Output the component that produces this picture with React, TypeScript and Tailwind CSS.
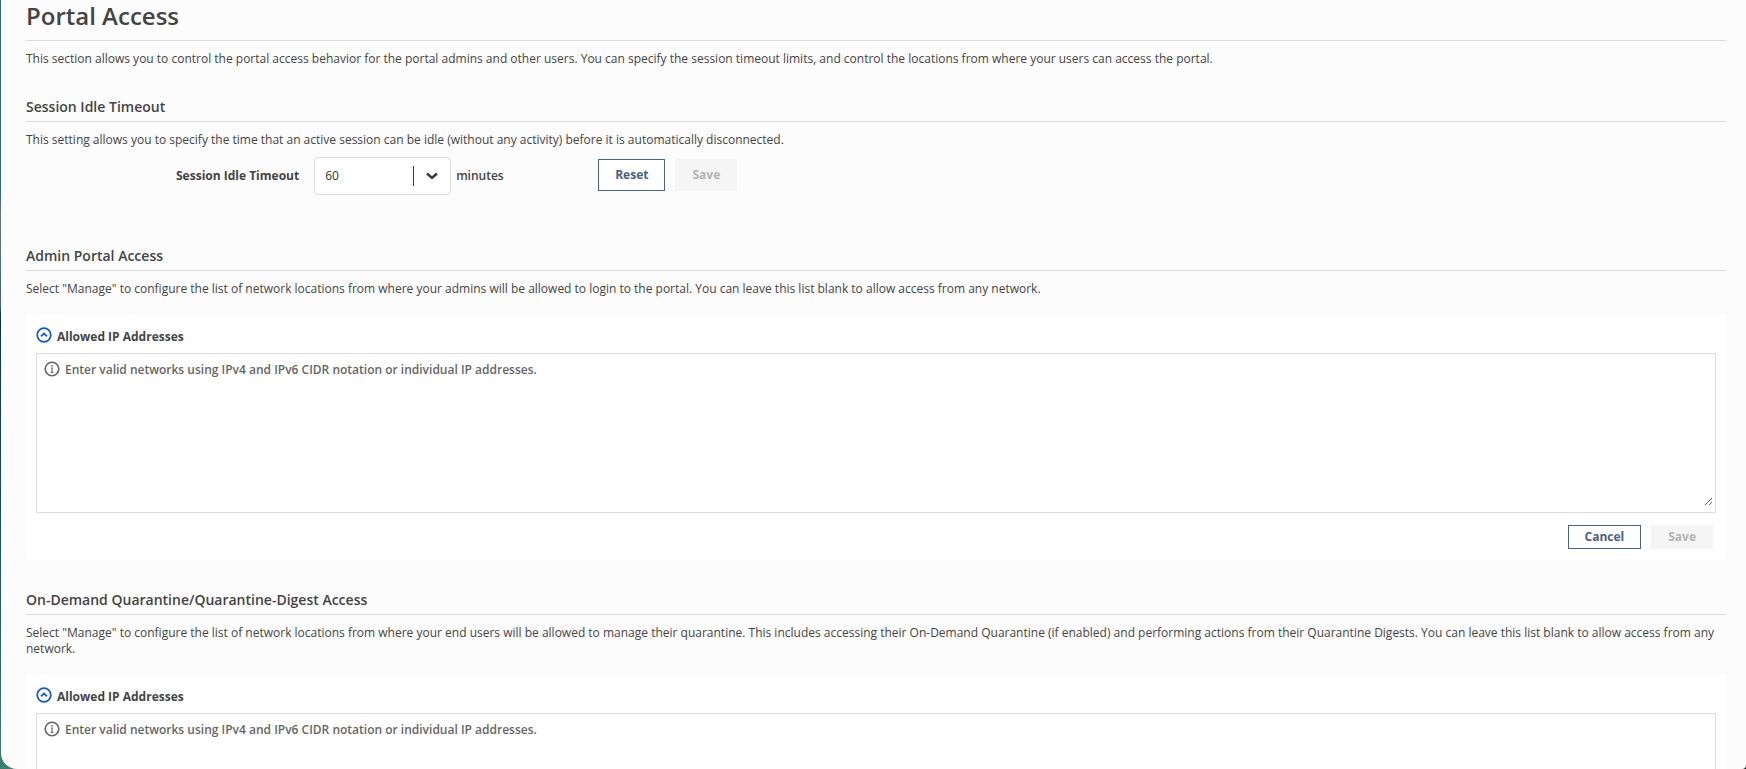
import { useId, useState } from "react";

interface AccessSectionProps {
  title: string;
  description: string;
}

const FONT = "font-['Open_Sans',sans-serif]";

// Wallpaper behind the panel, only visible at its left edge and corners.
const WALLPAPER =
  "bg-[#1c1c1c] bg-[linear-gradient(#2f6694_0%,#2f6694_25%,#5f7688_28%,#3b6283_40%,#0a3158_41%,#0f4f6a_65%,#256b70_85%,#3d8070_100%)] bg-size-[50%_100%] bg-no-repeat";

const outlineButton =
  "border border-[#48627f] bg-white px-4 text-xs font-bold text-[#48627f]";
const saveButton =
  "bg-[#f5f5f5] px-[17px] text-xs font-bold text-[#4a4a4a] disabled:text-[#b3b3b3]";

function CollapseIcon() {
  return (
    <svg aria-hidden viewBox="0 0 16 16" className="size-4" fill="none" stroke="#0f5bd7">
      <circle cx="8" cy="8" r="6.8" strokeWidth="1.7" />
      <path d="M5 9.4 8 6.6l3 2.8" strokeWidth="1.8" />
    </svg>
  );
}

function InfoIcon() {
  return (
    <svg aria-hidden viewBox="0 0 16 16" className="size-4" fill="none" stroke="#666">
      <circle cx="8" cy="8" r="6.8" strokeWidth="1.6" />
      <path d="M7 7.1h1.1v4.3M6.8 11.4h2.6" strokeWidth="1.1" />
      <circle cx="8" cy="4.9" r="0.8" fill="#666" stroke="none" />
    </svg>
  );
}

function SectionHeading({ children }: { children: string }) {
  return (
    <h2 className="border-b border-[#dcdcdc] pb-1 text-sm leading-5 font-semibold">
      {children}
    </h2>
  );
}

function SessionTimeout() {
  const id = useId();
  const [minutes, setMinutes] = useState("60");

  return (
    <section className="mt-[30px] mb-5">
      <SectionHeading>Session Idle Timeout</SectionHeading>
      <p className="mt-2.5 text-xs leading-4">
        This setting allows you to specify the time that an active session can be idle (without any
        activity) before it is automatically disconnected.
      </p>
      <div className="mt-[9px] flex items-center pl-[150px]">
        <label htmlFor={id} className="mr-[15px] text-xs font-bold">
          Session Idle Timeout
        </label>
        <div className="relative">
          <select
            id={id}
            value={minutes}
            onChange={(e) => setMinutes(e.target.value)}
            className="h-[38px] w-[137px] appearance-none rounded border border-[#dcdcdc] bg-white pl-2.5 text-xs font-medium text-[#333]"
          >
            <option>15</option>
            <option>30</option>
            <option>60</option>
          </select>
          <div className="pointer-events-none absolute inset-y-0 right-[13px] flex items-center gap-3">
            <span className="h-5 w-px bg-[#333]" />
            <svg aria-hidden viewBox="0 0 12 8" className="h-2 w-3" fill="none" stroke="#3a3a3a">
              <path d="M1 1.5 6 6l5-4.5" strokeWidth="2.4" />
            </svg>
          </div>
        </div>
        <span className="ml-[5px] w-[142px] text-xs font-semibold">minutes</span>
        <div className="flex gap-2.5 pb-0.5">
          <button
            type="button"
            className={`h-8 ${outlineButton}`}
            onClick={() => setMinutes("60")}
          >
            Reset
          </button>
          <button type="button" disabled className={`h-8 ${saveButton}`}>
            Save
          </button>
        </div>
      </div>
    </section>
  );
}

function AccessSection({ title, description }: AccessSectionProps) {
  const id = useId();
  const [open, setOpen] = useState(true);
  const [networks, setNetworks] = useState("");

  return (
    <section className="pt-[31px]">
      <SectionHeading>{title}</SectionHeading>
      <p className="mt-2.5 text-xs leading-4">{description}</p>
      <div className="mt-[18px] bg-white px-2.5 pt-3 pb-2.5">
        <div className="flex h-[26px] items-start gap-[5px]">
          <button
            type="button"
            aria-expanded={open}
            aria-label="Toggle allowed IP addresses"
            onClick={() => setOpen(!open)}
          >
            <CollapseIcon />
          </button>
          <label htmlFor={id} className="text-xs leading-5 font-bold">
            Allowed IP Addresses
          </label>
        </div>
        {open && (
          <>
            <div className="relative border border-[#dcdcdc] pt-1 pr-0.5 pb-1.5 pl-1">
              <textarea
                id={id}
                value={networks}
                onChange={(e) => setNetworks(e.target.value)}
                placeholder="Enter valid networks using IPv4 and IPv6 CIDR notation or individual IP addresses."
                className="block h-[148px] w-full pt-0.5 pl-6 text-xs leading-5 font-semibold outline-none placeholder:text-[#666]"
              />
              {networks === "" && (
                <span className="pointer-events-none absolute top-[7px] left-[7px]">
                  <InfoIcon />
                </span>
              )}
            </div>
            <div className="mt-3 flex justify-end gap-2.5 pr-[3px]">
              <button
                type="button"
                className={`h-6 ${outlineButton}`}
                onClick={() => setNetworks("")}
              >
                Cancel
              </button>
              <button type="button" disabled={networks === ""} className={`h-6 ${saveButton}`}>
                Save
              </button>
            </div>
          </>
        )}
      </div>
    </section>
  );
}

export default function App() {
  return (
    <div className={`h-screen pl-px ${WALLPAPER}`}>
      <main
        className={`h-full overflow-y-auto rounded-br-[4px] rounded-bl-[16px] bg-[#fcfcfc] pr-5 pl-[25px] text-[#444] [scrollbar-width:none] ${FONT}`}
      >
        <h1 className="border-b border-[#dcdcdc] pb-2 text-2xl leading-8 font-semibold">
          Portal Access
        </h1>
        <p className="mt-2.5 text-xs leading-4">
          This section allows you to control the portal access behavior for the portal admins and
          other users. You can specify the session timeout limits, and control the locations from
          where your users can access the portal.
        </p>
        <SessionTimeout />
        <AccessSection
          title="Admin Portal Access"
          description={
            'Select "Manage" to configure the list of network locations from where your admins will be allowed to login to the portal. You can leave this list blank to allow access from any network.'
          }
        />
        <AccessSection
          title="On-Demand Quarantine/Quarantine-Digest Access"
          description={
            'Select "Manage" to configure the list of network locations from where your end users will be allowed to manage their quarantine. This includes accessing their On-Demand Quarantine (if enabled) and performing actions from their Quarantine Digests. You can leave this list blank to allow access from any network.'
          }
        />
      </main>
    </div>
  );
}
